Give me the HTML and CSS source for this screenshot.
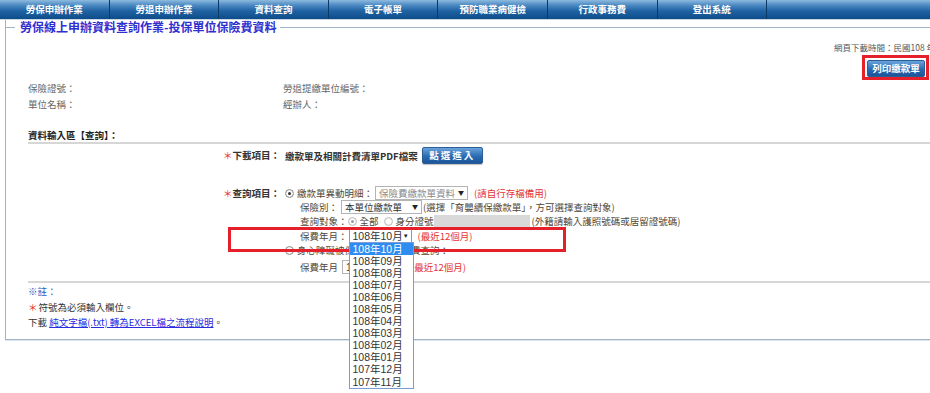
FILE: index.html
```html
<!DOCTYPE html>
<html>
<head>
    <meta charset="utf-8">
    <title>勞保線上申辦資料查詢作業</title>
    <link rel="stylesheet" href="styles.css">
</head>
<body>
    <div class="menu">
        <a class="menu-item">勞保申辦作業</a>
        <a class="menu-item">勞退申辦作業</a>
        <a class="menu-item">資料查詢</a>
        <a class="menu-item">電子帳單</a>
        <a class="menu-item">預防職業病健檢</a>
        <a class="menu-item">行政事務費</a>
        <a class="menu-item">登出系統</a>
    </div>

    <div class="panel">
        <div class="panel-head"><span class="panel-title">勞保線上申辦資料查詢作業-投保單位保險費資料</span></div>

        <div class="download-time">網頁下載時間：民國108 年10 月</div>
        <div class="print-row">
            <span class="button print-button">列印繳款單<span class="mark mark-print"></span></span>
        </div>

        <div class="info">
            <div>保險證號：</div>
            <div>勞退提繳單位編號：</div>
            <div>單位名稱：</div>
            <div>經辦人：</div>
        </div>

        <div class="section-title">資料輸入區【查詢】：</div>

        <div class="form">
            <div class="form-label download-label"><span class="req">＊</span>下載項目：</div>
            <div class="download-field">
                <span class="file-name">繳款單及相關計費清單PDF檔案</span>
                <span class="button enter-button">點選進入</span>
            </div>

            <div class="form-label query-label"><span class="req">＊</span>查詢項目：</div>
            <div class="query-field">
                <div class="line">
                    <span class="radio checked"></span>
                    <span>繳款單異動明細：</span>
                    <span class="select select-type is-dim">保險費繳款單資料<i class="arrow">▼</i></span>
                    <span class="hint">(請自行存檔備用)</span>
                </div>
                <div class="line sub">
                    <span>保險別：</span>
                    <span class="select select-kind">本單位繳款單<i class="arrow">▼</i></span>
                    <span>(選擇「育嬰續保繳款單」，方可選擇查詢對象)</span>
                </div>
                <div class="line sub">
                    <span>查詢對象：</span>
                    <span class="radio checked disabled"></span>
                    <span class="choice">全部</span>
                    <span class="radio disabled"></span>
                    <span>身分證號</span>
                    <span class="id-input"></span>
                    <span>(外籍請輸入護照號碼或居留證號碼)</span>
                </div>
                <div class="line sub month-line">
                    <span>保費年月：</span>
                    <span class="select select-month is-focus">108年10月<i class="arrow">▼</i>
                        <span class="options">
                            <span class="option is-active">108年10月</span>
                            <span class="option">108年09月</span>
                            <span class="option">108年08月</span>
                            <span class="option">108年07月</span>
                            <span class="option">108年06月</span>
                            <span class="option">108年05月</span>
                            <span class="option">108年04月</span>
                            <span class="option">108年03月</span>
                            <span class="option">108年02月</span>
                            <span class="option">108年01月</span>
                            <span class="option">107年12月</span>
                            <span class="option">107年11月</span>
                        </span>
                    </span>
                    <span class="hint">(最近12個月)</span>
                    <span class="mark mark-month"></span>
                </div>
                <div class="line">
                    <span class="radio"></span>
                    <span>身心障礙被保險人減免保險費查詢：</span>
                </div>
                <div class="line sub month-line-2">
                    <span>保費年月</span>
                    <span class="select select-month">108年10月<i class="arrow">▼</i></span>
                    <span class="hint">(最近12個月)</span>
                </div>
            </div>
        </div>

        <div class="notes">
            <div class="notes-title">※註：</div>
            <div class="notes-line"><span class="req">＊</span>符號為必須輸入欄位。</div>
            <div class="notes-line">下載 <a class="link">純文字檔(.txt) 轉為EXCEL檔之流程說明</a>。</div>
        </div>
    </div>
</body>
</html>
```

FILE: styles.css
```css
html {
    overflow: hidden;
}
body {
    margin: 0;
    min-height: 393px;
    font-family: "Noto Sans CJK TC", "Liberation Sans", sans-serif;
    font-size: 9.5px;
    line-height: 14px;
    color: #4f4636;
    background-color: #fff;
}
.menu {
    display: flex;
    height: 19px;
    background: linear-gradient(#8cbade 0%, #4a88c2 28%, #1f62a2 58%, #0e4c8a 100%);
    border-bottom: 1px solid #c9d5e1;
}
.menu-item {
    flex: none;
    width: 108.6px;
    border-right: 1px solid #0b3a68;
    color: #fff;
    font-weight: bold;
    font-size: 9.5px;
    line-height: 19px;
    text-align: center;
}
.panel {
    margin: 7px -12px 0 5px;
    padding: 0 16px 9px 22px;
    border: 1px solid #9fb4c9;
    border-top: none;
    box-shadow: 0 1px 0 #dce4ec;
}
.panel-head {
    display: flex;
    align-items: center;
    height: 14px;
    margin: -7px -16px 0 -23px;
}
.panel-head::before,
.panel-head::after {
    content: "";
    border-top: 1px solid #9fb4c9;
}
.panel-head::before {
    width: 10px;
}
.panel-head::after {
    flex: 1;
}
.panel-title {
    padding: 0 4px 0 5px;
    font-size: 12px;
    line-height: 14px;
    font-weight: bold;
    color: #2f2fd0;
}
.download-time {
    margin-top: 6px;
    padding-left: 806px;
    height: 14px;
    white-space: nowrap;
    font-size: 8.5px;
    color: #555;
}
.print-row {
    display: flex;
    justify-content: flex-end;
    margin-top: 6px;
}
.button {
    position: relative;
    display: inline-block;
    height: 15px;
    border: 1px solid #2b5d96;
    border-radius: 2px;
    background: linear-gradient(#6aa3dc, #2a6bb2 55%, #1b5599);
    color: #fff;
    font-weight: bold;
    line-height: 15px;
    text-align: center;
    box-shadow: 0 1px 1px rgba(0,0,0,0.25);
}
.print-button {
    width: 56px;
}
.enter-button {
    width: 59px;
    letter-spacing: 2px;
}
.mark {
    position: absolute;
    border: 3px solid #e5202a;
}
.mark-print {
    left: -6px;
    top: -6px;
    width: 61px;
    height: 19px;
}
.info {
    display: grid;
    grid-template-columns: 255px 1fr;
    margin-top: 3px;
    line-height: 16px;
    color: #666;
}
.section-title {
    margin: 17px -16px 0 0;
    line-height: 13px;
    font-weight: bold;
    color: #222;
    border-bottom: 2px solid #d6d6d6;
}
.form {
    display: grid;
    grid-template-columns: 252px 1fr;
    column-gap: 5px;
}
.form-label {
    text-align: right;
    color: #333;
    font-weight: bold;
}
.req {
    color: #e8302a;
    font-weight: normal;
}
.download-label {
    margin-top: 3px;
    line-height: 17px;
}
.download-field {
    display: flex;
    align-items: center;
    gap: 4px;
    margin-top: 3px;
    height: 17px;
}
.file-name {
    font-weight: bold;
    color: #333;
}
.query-label {
    margin-top: 22px;
}
.query-field {
    margin-top: 22px;
}
.line {
    position: relative;
    display: flex;
    align-items: center;
    height: 14px;
    white-space: nowrap;
}
.sub {
    padding-left: 15px;
}
.month-line {
    height: 15px;
}
.month-line-2 {
    margin-top: 2px;
    height: 16px;
}
.radio {
    position: relative;
    flex: none;
    width: 7px;
    height: 7px;
    margin-right: 3px;
    border: 1px solid #8d8d8d;
    border-radius: 50%;
    background: radial-gradient(#fff 40%, #d9d9d9);
}
.radio.checked::after {
    content: "";
    position: absolute;
    left: 2px;
    top: 2px;
    width: 3px;
    height: 3px;
    border-radius: 50%;
    background-color: #333;
}
.radio.disabled {
    border-color: #bdbdbd;
}
.radio.disabled.checked::after {
    background-color: #9a9a9a;
}
.choice {
    margin-right: 5px;
}
.select {
    position: relative;
    display: inline-flex;
    align-items: center;
    box-sizing: border-box;
    height: 14px;
    padding: 0 3px;
    border: 1px solid #b4b4b4;
    background-color: #fff;
    color: #333;
}
.arrow {
    margin-left: auto;
    font-style: normal;
    font-size: 6px;
    color: #222;
}
.is-dim {
    color: #8a8a8a;
}
.select-type {
    width: 93px;
    margin-left: 2px;
}
.select-kind {
    width: 81px;
    margin-left: 3px;
    margin-right: 1px;
}
.select-month {
    width: 63px;
    margin-left: 1px;
    font-family: "Liberation Sans", "Noto Sans CJK TC", sans-serif;
    font-size: 10.5px;
}
.month-line-2 .select-month {
    margin-left: 4px;
}
.is-focus {
    border-color: #7a9cd3;
}
.hint {
    margin-left: 6px;
    color: #e53333;
}
.id-input {
    width: 96px;
    height: 13px;
    background-color: #d9d9d9;
    margin-right: 2px;
}
.options {
    position: absolute;
    z-index: 2;
    left: -1px;
    top: 12px;
    width: 63px;
    display: flex;
    flex-direction: column;
    border: 1px solid #7a9cd3;
    background-color: #fff;
}
.option {
    height: 12.1px;
    line-height: 12.1px;
    padding-left: 3px;
    font-size: 10.5px;
    color: #333;
}
.option.is-active {
    background-color: #2f8cf0;
    color: #fff;
}
.mark-month {
    left: -57px;
    top: -1px;
    width: 332px;
    height: 19px;
    z-index: 1;
}
.notes {
    margin: 6px -16px 0 0;
    padding-top: 1px;
    border-top: 2px solid #d6d6d6;
}
.notes-title {
    color: #2a5cc8;
}
.notes-line {
    line-height: 15px;
    color: #333;
}
.notes-title + .notes-line {
    margin-top: 2px;
}
.notes-line .req {
    margin-right: 1px;
}
.link {
    color: #2a2adf;
    text-decoration: underline;
}
```
